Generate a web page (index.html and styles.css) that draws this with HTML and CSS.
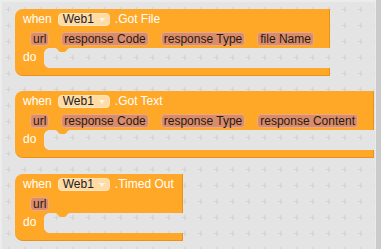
FILE: index.html
```html
<!DOCTYPE html>
<html>
<head>
  <title>Web1 events</title>
  <link rel="stylesheet" href="styles.css">
</head>
<body>
  <div class="screen">
    <div class="workspace">
      <!-- workspace grid -->
      <svg class="grid" width="100%" height="100%">
        <defs>
          <pattern id="grid-cross" width="16" height="16" patternUnits="userSpaceOnUse">
            <path d="M4 7.5h5M6.5 5v5" stroke="#d4d4d4" stroke-width="1"/>
          </pattern>
        </defs>
        <rect width="100%" height="100%" fill="url(#grid-cross)"/>
      </svg>

      <div class="blocks">
        <div class="block">
          <div class="block-head">
            <div class="title-row">
              <span class="label">when</span>
              <span class="dropdown">Web1<i class="arrow"></i></span>
              <span class="label event">.Got File</span>
            </div>
            <div class="param-row">
              <span class="param">url</span>
              <span class="param">response Code</span>
              <span class="param">response Type</span>
              <span class="param">file Name</span>
            </div>
          </div>
          <div class="block-do">
            <div class="do-column"><span class="label">do</span></div>
            <div class="do-slot">
              <svg class="notch" width="15" height="4"><path d="M0 0C3 0 3 4 6 4H9C12 4 12 0 15 0Z"/></svg>
            </div>
          </div>
          <div class="block-foot"></div>
        </div>

        <div class="block">
          <div class="block-head">
            <div class="title-row">
              <span class="label">when</span>
              <span class="dropdown">Web1<i class="arrow"></i></span>
              <span class="label event">.Got Text</span>
            </div>
            <div class="param-row">
              <span class="param">url</span>
              <span class="param">response Code</span>
              <span class="param">response Type</span>
              <span class="param">response Content</span>
            </div>
          </div>
          <div class="block-do">
            <div class="do-column"><span class="label">do</span></div>
            <div class="do-slot">
              <svg class="notch" width="15" height="4"><path d="M0 0C3 0 3 4 6 4H9C12 4 12 0 15 0Z"/></svg>
            </div>
          </div>
          <div class="block-foot"></div>
        </div>

        <div class="block block-last">
          <div class="block-head">
            <div class="title-row">
              <span class="label">when</span>
              <span class="dropdown">Web1<i class="arrow"></i></span>
              <span class="label event">.Timed Out</span>
            </div>
            <div class="param-row">
              <span class="param">url</span>
            </div>
          </div>
          <div class="block-do">
            <div class="do-column"><span class="label">do</span></div>
            <div class="do-slot">
              <svg class="notch" width="15" height="4"><path d="M0 0C3 0 3 4 6 4H9C12 4 12 0 15 0Z"/></svg>
            </div>
          </div>
          <div class="block-foot"></div>
        </div>
      </div>
    </div>
    <div class="scrollbar"></div>
  </div>
</body>
</html>
```

FILE: styles.css
```css
/* Blockly style workspace */
body {
  margin: 0;
  font-family: "Liberation Sans", Arial, sans-serif;
  font-size: 12px;
  background-color: #e4e4e4;
}
.screen {
  display: flex;
  width: 381px;
  height: 249px;
  overflow: hidden;
}
.workspace {
  position: relative;
  flex: 1;
  border-top: 2px solid #ececec;
  border-left: 2px solid #ececec;
  padding: 7px 0 0 13px;
}
.grid {
  position: absolute;
  top: 0;
  left: 0;
}
.scrollbar {
  width: 5px;
  background-color: #cbcbcb;
  border-left: 1px solid #ebebeb;
}
.blocks {
  position: relative;
  display: flex;
  flex-direction: column;
  align-items: flex-start;
}

/* event block */
.block {
  display: flex;
  flex-direction: column;
  margin-bottom: 15px;
}
.block-last {
  margin-top: 1px;
}
.block-head {
  background-color: #ffa726;
  border-radius: 8px 0 0 0;
  border-right: 1px solid #e8921c;
}
.title-row {
  display: flex;
  align-items: center;
  height: 21px;
  padding: 0 8px 0 8px;
}
.label {
  color: #fff;
  line-height: 21px;
  white-space: nowrap;
}
.dropdown {
  display: flex;
  align-items: center;
  height: 11px;
  line-height: 11px;
  margin: 0 5px 0 6px;
  padding: 0 4px 0 4px;
  color: #222;
  background-color: #ffdba6;
  border: 1px solid #ffe6c0;
  border-radius: 4px;
}
.arrow {
  margin-left: 5px;
  border-left: 3px solid transparent;
  border-right: 3px solid transparent;
  border-top: 4px solid #fff4e4;
}
.param-row {
  display: flex;
  gap: 12px;
  height: 18px;
  padding: 2px 15px 0 15px;
  box-sizing: border-box;
}
.param {
  height: 12px;
  line-height: 12px;
  padding: 0 2px;
  color: #2a1a10;
  background-color: #d98c6c;
  border: 1px solid #eeaa7c;
  border-radius: 4px;
  white-space: nowrap;
}

/* statement input */
.block-do {
  display: flex;
  height: 20px;
}
.do-column {
  width: 29px;
  background-color: #ffa726;
  padding-left: 8px;
  box-sizing: border-box;
}
.do-column .label {
  line-height: 19px;
}
.do-slot {
  position: relative;
  flex: 1;
}
.do-slot::before,
.do-slot::after {
  content: "";
  position: absolute;
  left: 0;
  width: 5px;
  height: 5px;
}
.do-slot::before {
  top: 0;
  background: radial-gradient(circle at 100% 100%, transparent 4.5px, #ffa726 5px);
}
.do-slot::after {
  bottom: 0;
  background: radial-gradient(circle at 100% 0, transparent 4.5px, #ffa726 5px);
}
.notch {
  position: absolute;
  top: 0;
  left: 11px;
  fill: #ffa726;
}
.block-foot {
  height: 8px;
  background-color: #ffa726;
  border-radius: 0 0 0 8px;
  border-right: 1px solid #e8921c;
  border-bottom: 1px solid #e8921c;
  box-sizing: border-box;
}
```
